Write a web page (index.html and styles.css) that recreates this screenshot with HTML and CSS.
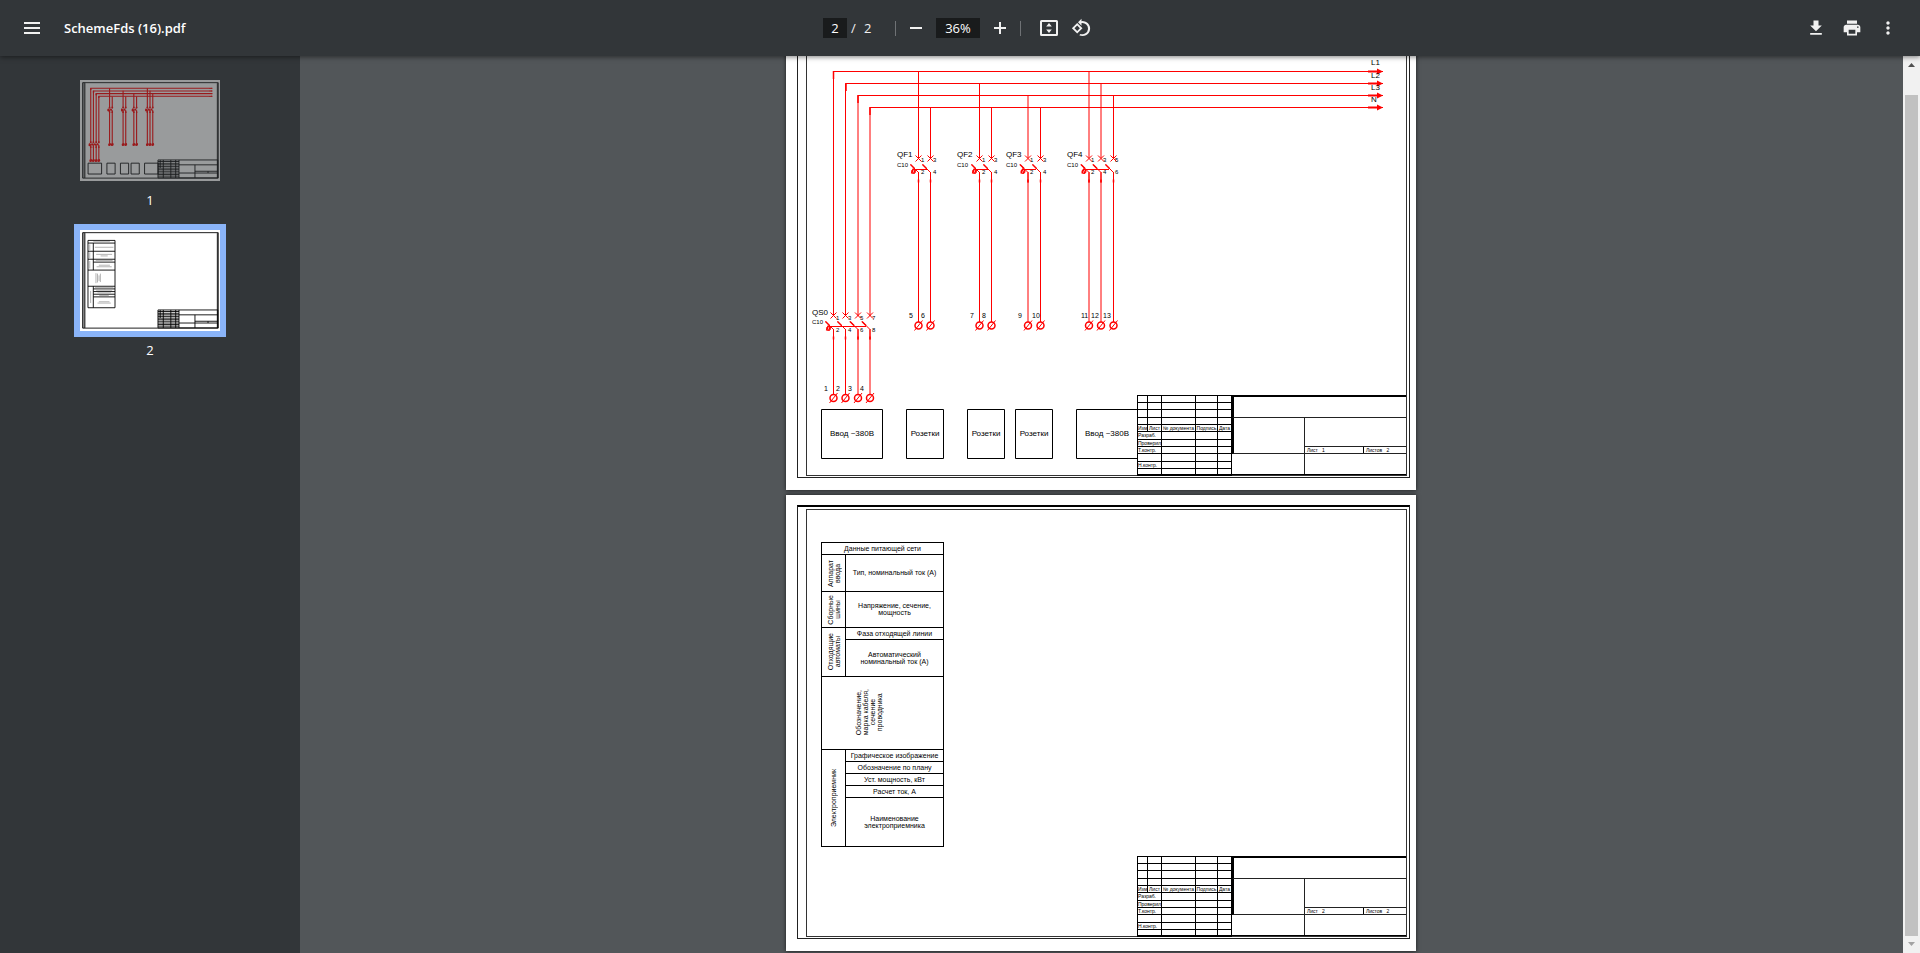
FILE: index.html
```html
<!DOCTYPE html>
<html lang="ru">
<head>
<meta charset="utf-8">
<title>SchemeFds (16).pdf</title>
<link rel="stylesheet" href="styles.css">
</head>
<body>
<svg class="defs" aria-hidden="true">
  <defs>
    <g id="pole">
      <path class="wire" d="M-3 -3L3 3M-3 3L3 -3M0 14V24"/>
      <path class="wire" d="M-8 6L0 14"/>
      <path class="bold" d="M-8 6L-4 10M0 21V24"/>
    </g>
    <g id="hook">
      <path class="bold" d="M-5 10L-7 15M-3 11L-5 15"/>
      <circle class="wire" cx="-5" cy="13" r="2"/>
    </g>
    <g id="terminal">
      <circle class="bold" r="3.500"/>
      <path class="wire" d="M-4 5L4 -5"/>
    </g>
    <path id="arrow" class="head" d="M-15 -1H-6V-3L0 0L-6 3V1H-15Z"/>
    <g id="schematic">
      <path class="wire" d="M833.5 316V71.5H1383M845.5 316V83.5H1383M858 316V95.5H1383M870 316V107.5H1383"/>
      <path class="bold" d="M833.5 71V79M846 83V91M858 95V103M870 107V115"/>
      <path class="wire" d="M918.5 71V158M930.5 108V158M979.5 83V158M991.5 108V158M1028 95V158M1040.5 108V158M1089 71V158M1101 83V158M1113.5 95V158"/>
      <path class="wire" d="M918.5 172V322M930.5 172V322M979.5 172V322M991.5 172V322M1028 172V322M1040.5 172V322M1089 172V322M1101 172V322M1113.5 172V322"/>
      <path class="wire" d="M833.5 329V395M845.5 329V395M858 329V395M870 329V395"/>
      <path class="wire" d="M914 169.5H927M975 169.5H988M1023 169.5H1036M1084 169.5H1109M829 326.5H866"/>
      <use href="#arrow" x="1383" y="71.5"/><use href="#arrow" x="1383" y="83.5"/><use href="#arrow" x="1383" y="95.5"/><use href="#arrow" x="1383" y="107.5"/>
      <use href="#pole" x="918.5" y="158.5"/><use href="#pole" x="930.5" y="158.5"/><use href="#hook" x="918.5" y="158.5"/>
      <use href="#pole" x="979.5" y="158.5"/><use href="#pole" x="991.5" y="158.5"/><use href="#hook" x="979.5" y="158.5"/>
      <use href="#pole" x="1028" y="158.5"/><use href="#pole" x="1040.5" y="158.5"/><use href="#hook" x="1028" y="158.5"/>
      <use href="#pole" x="1089" y="158.5"/><use href="#pole" x="1101" y="158.5"/><use href="#pole" x="1113.5" y="158.5"/><use href="#hook" x="1089" y="158.5"/>
      <use href="#pole" x="833.5" y="315.5"/><use href="#pole" x="845.5" y="315.5"/><use href="#pole" x="858" y="315.5"/><use href="#pole" x="870" y="315.5"/><use href="#hook" x="833.5" y="315.5"/>
      <use href="#terminal" x="918.5" y="325.5"/><use href="#terminal" x="930.5" y="325.5"/><use href="#terminal" x="979.5" y="325.5"/><use href="#terminal" x="991.5" y="325.5"/><use href="#terminal" x="1028" y="325.5"/><use href="#terminal" x="1040.5" y="325.5"/><use href="#terminal" x="1089" y="325.5"/><use href="#terminal" x="1101" y="325.5"/><use href="#terminal" x="1113.5" y="325.5"/>
      <use href="#terminal" x="833.5" y="398"/><use href="#terminal" x="845.5" y="398"/><use href="#terminal" x="858" y="398"/><use href="#terminal" x="870" y="398"/>
      <path class="box" d="M821.5 409.5H882.5V458.5H821.5ZM906.5 409.5H943.5V458.5H906.5ZM967.5 409.5H1004.5V458.5H967.5ZM1015.5 409.5H1052.5V458.5H1015.5ZM1076.5 409.5H1137.5V458.5H1076.5Z"/>
    </g>
    <g id="stamp-lines">
      <path class="box" d="M1137 856H1407V937H1137ZM1147 856V893M1161 856V937M1195 856V937M1217 856V937M1232 856V937M1137 863H1232M1137 871H1232M1137 878H1232M1137 885H1232M1137 893H1232M1137 900H1232M1137 907H1232M1137 915H1407M1137 922H1232M1137 929H1232M1232 878H1407M1304 878V937M1304 907H1407M1363 907V915"/>
    </g>
    <g id="frame-lines">
      <path class="strip" d="M797 506H807V938H797Z"/>
      <path class="box" d="M797 507H1409V938H797ZM807 509V937M1405 509V937"/>
    </g>
  </defs>
</svg>

<header class="toolbar">
  <div class="toolbar-start">
    <button class="tool" aria-label="Меню"><svg class="icon" viewBox="0 0 20 20"><path d="M2 4h16v2H2zM2 9h16v2H2zM2 14h16v2H2z"/></svg></button>
    <h1 class="title">SchemeFds (16).pdf</h1>
  </div>
  <div class="toolbar-center">
    <input class="field page-field" aria-label="Номер страницы" value="2">
    <span class="slash">/</span><span class="total">2</span>
    <span class="divider divider-left"></span>
    <button class="tool" aria-label="Уменьшить"><svg class="icon" viewBox="0 0 20 20"><path d="M4 9h12v2H4z"/></svg></button>
    <input class="field zoom-field" aria-label="Масштаб" value="36%">
    <button class="tool" aria-label="Увеличить"><svg class="icon" viewBox="0 0 20 20"><path d="M9 4h2v5h5v2h-5v5H9v-5H4V9h5z"/></svg></button>
    <span class="divider divider-right"></span>
    <button class="tool" aria-label="По размеру страницы"><svg class="icon" viewBox="0 0 20 20"><path fill-rule="evenodd" d="M2.500 2H17.500Q19 2 19 3.500V16.500Q19 18 17.500 18H2.500Q1 18 1 16.500V3.500Q1 2 2.500 2ZM3 4V16H17V4ZM10 5L12.800 8.500H7.200ZM10 15L7.200 11.500H12.800Z"/></svg></button>
    <button class="tool" aria-label="Повернуть"><svg class="icon" viewBox="0 0 20 20"><path fill-rule="evenodd" d="M6.200 5L11.500 10.300L6.200 15.600L.9 10.300ZM6.200 7.600L3.500 10.300L6.200 13L8.900 10.300Z"/><path d="M10.500 .8V3.200A7.500 7.500 0 1 1 8.200 17.300L9.500 15.900A5.600 5.600 0 1 0 10.500 5.100V7.700L7 4.200Z"/></svg></button>
  </div>
  <div class="toolbar-end">
    <button class="tool" aria-label="Скачать"><svg class="icon" viewBox="0 0 24 24"><path d="M19 9h-4V3H9v6H5l7 7 7-7zM5 18v2h14v-2H5z"/></svg></button>
    <button class="tool" aria-label="Печать"><svg class="icon" viewBox="0 0 24 24"><path d="M19 8H5c-1.660 0-3 1.340-3 3v6h4v4h12v-4h4v-6c0-1.660-1.340-3-3-3zm-3 11H8v-5h8v5zm3-7c-.550 0-1-.450-1-1s.450-1 1-1 1 .450 1 1-.450 1-1 1zm-1-9H6v4h12V3z"/></svg></button>
    <button class="tool" aria-label="Ещё"><svg class="icon" viewBox="0 0 24 24"><path d="M12 8c1.100 0 2-.9 2-2s-.9-2-2-2-2 .9-2 2 .9 2 2 2zm0 2c-1.100 0-2 .9-2 2s.9 2 2 2 2-.9 2-2-.9-2-2-2zm0 6c-1.100 0-2 .9-2 2s.9 2 2 2 2-.9 2-2-.9-2-2-2z"/></svg></button>
  </div>
</header>

<div class="body">
  <aside class="sidebar">
    <button class="thumb">
      <svg class="thumb-page dim" viewBox="786 34 630 456">
        <g transform="translate(0 -461)"><use href="#frame-lines"/></g>
        <use href="#schematic"/>
        <g transform="translate(0 -461)"><use href="#stamp-lines"/></g>
      </svg>
      <span class="thumb-label">1</span>
    </button>
    <button class="thumb">
      <svg class="thumb-page selected" viewBox="786 495 630 456">
        <use href="#frame-lines"/>
        <use href="#stamp-lines"/>
        <path class="box" d="M821 542H943V846H821ZM821 554H943M821 591H943M821 627H943M845 640H943M821 676H943M821 749H943M845 761H943M845 773H943M845 785H943M845 797H943M845 554V676M845 749V846"/>
        <path class="scribble" d="M845 548H920M852 573H936M858 605H930M878 612H910M856 633H932M870 654H920M860 661H928M857 690V735M864 692V732M871 700V725M877 692V730M852 755H936M858 767H930M864 779H925M872 791H915M870 819H918M864 825H924M829 560V586M829 596V623M829 635V669M833 770V825"/>
      </svg>
      <span class="thumb-label">2</span>
    </button>
  </aside>

  <main class="viewer">
    <article class="sheet sheet-first">
      <div class="frame">
        <div class="frame-inner">
          <div class="stamp">
            <table class="stamp-table">
              <colgroup><col class="c-rev"><col class="c-list"><col class="c-doc"><col class="c-sign"><col class="c-date"></colgroup>
              <tr><td></td><td></td><td></td><td></td><td></td></tr>
              <tr><td></td><td></td><td></td><td></td><td></td></tr>
              <tr><td></td><td></td><td></td><td></td><td></td></tr>
              <tr><td></td><td></td><td></td><td></td><td></td></tr>
              <tr><th>Изм</th><th>Лист</th><th>№ документа</th><th>Подпись</th><th>Дата</th></tr>
              <tr><td colspan="2">Разраб.</td><td></td><td></td><td></td></tr>
              <tr><td colspan="2">Проверил</td><td></td><td></td><td></td></tr>
              <tr><td colspan="2">Т.контр.</td><td></td><td></td><td></td></tr>
              <tr><td colspan="2"></td><td></td><td></td><td></td></tr>
              <tr><td colspan="2">Н.контр.</td><td></td><td></td><td></td></tr>
              <tr><td colspan="2"></td><td></td><td></td><td></td></tr>
            </table>
            <div class="stamp-main">
              <div class="stamp-code"></div>
              <div class="stamp-name"></div>
              <div class="stamp-info"><div class="stamp-pages"><span class="stamp-no">Лист&nbsp;&nbsp; 1</span><span class="stamp-count">Листов&nbsp;&nbsp; 2</span></div></div>
              <div class="stamp-left"></div>
              <div class="stamp-right"></div>
            </div>
          </div>
        </div>
      </div>
      <svg class="drawing" viewBox="786 34 630 456">
        <use href="#schematic"/>
        <g class="t8">
          <text x="1371" y="65">L1</text><text x="1371" y="78">L2</text><text x="1371" y="90">L3</text><text x="1371" y="102">N</text>
          <text x="897" y="157">QF1</text><text x="957" y="157">QF2</text><text x="1006" y="157">QF3</text><text x="1067" y="157">QF4</text><text x="812" y="315">QS0</text>
          <g class="mid"><text x="852" y="436">Ввод ~380В</text><text x="925" y="436">Розетки</text><text x="986" y="436">Розетки</text><text x="1034" y="436">Розетки</text><text x="1107" y="436">Ввод ~380В</text></g>
        </g>
        <g class="t6">
          <text x="897" y="167">C10</text><text x="957" y="167">C10</text><text x="1006" y="167">C10</text><text x="1067" y="167">C10</text><text x="812" y="324">C10</text>
          <text x="921" y="162">1</text><text x="933" y="162">3</text><text x="982" y="162">1</text><text x="994" y="162">3</text><text x="1030" y="162">1</text><text x="1043" y="162">3</text><text x="1091" y="162">1</text><text x="1103" y="162">3</text><text x="1115" y="162">5</text>
          <text x="921" y="174">2</text><text x="933" y="174">4</text><text x="982" y="174">2</text><text x="994" y="174">4</text><text x="1030" y="174">2</text><text x="1043" y="174">4</text><text x="1091" y="174">2</text><text x="1103" y="174">4</text><text x="1115" y="174">6</text>
          <text x="836" y="320">1</text><text x="848" y="320">3</text><text x="860" y="320">5</text><text x="872" y="320">7</text>
          <text x="836" y="332">2</text><text x="848" y="332">4</text><text x="860" y="332">6</text><text x="872" y="332">8</text>
        </g>
        <g class="t7">
          <text x="824" y="391">1</text><text x="836" y="391">2</text><text x="848" y="391">3</text><text x="860" y="391">4</text>
          <text x="909" y="318">5</text><text x="921" y="318">6</text><text x="970" y="318">7</text><text x="982" y="318">8</text><text x="1018" y="318">9</text><text x="1032" y="318">10</text><text x="1081" y="318">11</text><text x="1091" y="318">12</text><text x="1103" y="318">13</text>
        </g>
      </svg>
    </article>

    <article class="sheet">
      <div class="frame">
        <div class="frame-inner">
          <table class="spec">
            <colgroup><col class="c-group"><col></colgroup>
            <tr class="r-line"><td colspan="2">Данные питающей сети</td></tr>
            <tr class="r-block"><th><span class="turn">Аппарат<br>ввода</span></th><td>Тип, номинальный ток (А)</td></tr>
            <tr class="r-bus"><th><span class="turn">Сборные<br>шины</span></th><td>Напряжение, сечение,<br>мощность</td></tr>
            <tr class="r-line"><th rowspan="2"><span class="turn">Отходящие<br>автоматы</span></th><td>Фаза отходящей линии</td></tr>
            <tr class="r-block"><td>Автоматический<br>номинальный ток (А)</td></tr>
            <tr class="r-cable"><td class="cable" colspan="2"><span class="turn">Обозначение,<br>марка кабеля,<br>сечение<br>проводника</span></td></tr>
            <tr class="r-line"><th rowspan="5"><span class="turn">Электроприемник</span></th><td>Графическое изображение</td></tr>
            <tr class="r-line"><td>Обозначение по плану</td></tr>
            <tr class="r-line"><td>Уст. мощность, кВт</td></tr>
            <tr class="r-line"><td>Расчет ток, А</td></tr>
            <tr class="r-name"><td>Наименование<br>электроприемника</td></tr>
          </table>
          <div class="stamp">
            <table class="stamp-table">
              <colgroup><col class="c-rev"><col class="c-list"><col class="c-doc"><col class="c-sign"><col class="c-date"></colgroup>
              <tr><td></td><td></td><td></td><td></td><td></td></tr>
              <tr><td></td><td></td><td></td><td></td><td></td></tr>
              <tr><td></td><td></td><td></td><td></td><td></td></tr>
              <tr><td></td><td></td><td></td><td></td><td></td></tr>
              <tr><th>Изм</th><th>Лист</th><th>№ документа</th><th>Подпись</th><th>Дата</th></tr>
              <tr><td colspan="2">Разраб.</td><td></td><td></td><td></td></tr>
              <tr><td colspan="2">Проверил</td><td></td><td></td><td></td></tr>
              <tr><td colspan="2">Т.контр.</td><td></td><td></td><td></td></tr>
              <tr><td colspan="2"></td><td></td><td></td><td></td></tr>
              <tr><td colspan="2">Н.контр.</td><td></td><td></td><td></td></tr>
              <tr><td colspan="2"></td><td></td><td></td><td></td></tr>
            </table>
            <div class="stamp-main">
              <div class="stamp-code"></div>
              <div class="stamp-name"></div>
              <div class="stamp-info"><div class="stamp-pages"><span class="stamp-no">Лист&nbsp;&nbsp; 2</span><span class="stamp-count">Листов&nbsp;&nbsp; 2</span></div></div>
              <div class="stamp-left"></div>
              <div class="stamp-right"></div>
            </div>
          </div>
        </div>
      </div>
    </article>
  </main>

  <div class="scrollbar" aria-hidden="true">
    <svg class="scroll-arrow" viewBox="0 0 17 17"><path d="M8.500 7L12 11H5Z"/></svg>
    <div class="scroll-thumb"></div>
    <svg class="scroll-arrow off" viewBox="0 0 17 17"><path d="M5 6H12L8.500 10Z"/></svg>
  </div>
</div>
</body>
</html>
```

FILE: styles.css
```css
* { box-sizing: border-box; }

body {
  margin: 0;
  height: 100vh;
  display: flex;
  flex-direction: column;
  overflow: hidden;
  background: #525659;
  font-family: "Open Sans", "Noto Sans", sans-serif;
}

.defs { position: absolute; width: 0; height: 0; }

button { border: 0; padding: 0; background: none; font: inherit; color: inherit; }

/* Toolbar */
.toolbar {
  position: relative;
  z-index: 2;
  flex: none;
  height: 56px;
  display: grid;
  grid-template-columns: 1fr auto 1fr;
  align-items: center;
  padding: 0 16px;
  background: #323639;
  color: #f1f1f1;
  box-shadow: 0 1px 5px rgba(0, 0, 0, .5);
  font-size: 13px;
}
.toolbar-start { display: flex; align-items: center; gap: 16px; }
.toolbar-center { display: flex; align-items: center; }
.toolbar-end { display: flex; justify-content: flex-end; gap: 4px; }
.tool { width: 32px; height: 32px; display: grid; place-items: center; }
.icon { width: 20px; height: 20px; fill: #f1f1f1; display: block; }
.title { margin: 0; font-size: 13px; font-weight: 600; color: #fff; }
.field {
  height: 20px;
  padding: 0;
  border: 0;
  background: #191b1c;
  color: #fff;
  font: 13px "Open Sans", "Noto Sans", sans-serif;
  text-align: center;
}
.page-field { width: 24px; }
.zoom-field { width: 44px; margin: 0 4px; }
.slash { width: 17px; padding-left: 4px; }
.total { width: 7px; }
.divider { width: 1px; height: 15px; background: #6f7275; }
.divider-left { margin: 0 4px 0 24px; }
.divider-right { margin: 0 12px 0 4px; }

.body { flex: 1; min-height: 0; display: flex; }

/* Thumbnails */
.sidebar {
  flex: none;
  width: 300px;
  padding-top: 24px;
  display: flex;
  flex-direction: column;
  align-items: center;
  gap: 19px;
  background: #323639;
  color: #fff;
}
.thumb { display: flex; flex-direction: column; align-items: center; }
.thumb-page {
  display: block;
  width: 140px;
  height: 101px;
  background: #fff;
  --line: 5px;
  --bold: 6px;
  --box: 4px;
}
.thumb-page.dim { opacity: .5; }
.thumb-page.selected { box-shadow: 0 0 0 6px #8ab4f8; }
.thumb-label { padding-top: 8px; font-size: 13px; line-height: 22px; }

/* Line work */
.wire { fill: none; stroke: #f00; stroke-width: var(--line, 1px); }
.bold { fill: none; stroke: #f00; stroke-width: var(--bold, 1.500px); }
.head { fill: #f00; }
.box { fill: none; stroke: #000; stroke-width: var(--box, 1px); }
.strip { fill: #999; }
.scribble { fill: none; stroke: #aaa; stroke-width: 4px; }

/* Viewer */
.viewer {
  flex: 1;
  min-width: 0;
  padding-right: 1px;
  overflow: hidden;
  display: flex;
  flex-direction: column;
  align-items: center;
  gap: 5px;
}
.sheet {
  position: relative;
  flex: none;
  width: 630px;
  height: 456px;
  padding: 10px 6px 12px 11px;
  background: #fff;
  box-shadow: 0 0 4px rgba(0, 0, 0, .7);
  color: #000;
  font-family: "Liberation Sans", Arial, sans-serif;
}
.sheet-first { margin-top: -22px; }
.frame { height: 100%; padding: 2px 2px 1px 8px; border: 1px solid #222; border-top: 2px solid #000; }
.frame-inner { height: 100%; display: flex; align-items: flex-start; border: 1px solid #333; }
.drawing { position: absolute; inset: 0; width: 100%; height: 100%; fill: #000; }
.t8 { font-size: 8px; }
.t7 { font-size: 7px; }
.t6 { font-size: 6px; }
.mid { text-anchor: middle; }

/* Specification table */
.spec {
  width: 123px;
  margin: 32px 0 0 14px;
  border-collapse: collapse;
  table-layout: fixed;
  font-size: 7px;
  line-height: 7px;
  text-align: center;
}
.spec td, .spec th { padding: 0; border: 1px solid #000; font-weight: normal; white-space: nowrap; vertical-align: middle; }
.spec td { padding-bottom: 1px; }
.c-group { width: 24px; }
.r-line { height: 12px; }
.r-block { height: 37px; }
.r-bus { height: 36px; }
.r-cable { height: 73px; }
.r-name { height: 49px; }
.turn { display: inline-block; writing-mode: vertical-rl; transform: rotate(180deg); vertical-align: middle; }
.spec .cable { padding-right: 28px; }

/* Title block */
.stamp {
  width: 269px;
  height: 80px;
  margin-left: auto;
  align-self: flex-end;
  display: flex;
  border-bottom: 1px solid #000;
  font-size: 5px;
  line-height: 6px;
}
.stamp-table { flex: none; width: 95px; border-collapse: collapse; table-layout: fixed; }
.stamp-table tr { height: 7px; }
.stamp-table tr:nth-child(3n) { height: 8px; }
.stamp-table td, .stamp-table th {
  padding: 0;
  border: 1px solid #000;
  font-weight: normal;
  text-align: left;
  white-space: nowrap;
  line-height: 5px;
}
.stamp-table th { text-align: center; }
.c-rev { width: 10px; }
.c-list { width: 14px; }
.c-doc { width: 34px; }
.c-sign { width: 22px; }
.c-date { width: 14px; }
.stamp-main { flex: 1; display: grid; grid-template-columns: 73px 1fr; grid-template-rows: 22px 37px 1fr; }
.stamp-code { grid-column: 1 / 3; border-top: 2px solid #000; border-left: 2px solid #000; }
.stamp-name { border: 1px solid #222; border-left: 2px solid #000; }
.stamp-info { display: flex; align-items: flex-end; border-top: 1px solid #222; }
.stamp-pages { flex: 1; display: flex; height: 8px; border: 1px solid #222; border-left: 0; border-right: 0; }
.stamp-no { width: 59px; padding-left: 2px; border-right: 1px solid #000; }
.stamp-count { padding-left: 2px; }
.stamp-left { border-right: 1px solid #222; }

/* Scrollbar */
.scrollbar { flex: none; width: 17px; display: flex; flex-direction: column; background: #f1f1f1; }
.scroll-arrow { display: block; width: 17px; height: 17px; fill: #505050; }
.scroll-arrow.off { fill: #a3a3a3; }
.scroll-thumb { flex: 1; margin: 22px 2px 0; background: #c1c1c1; }
```
